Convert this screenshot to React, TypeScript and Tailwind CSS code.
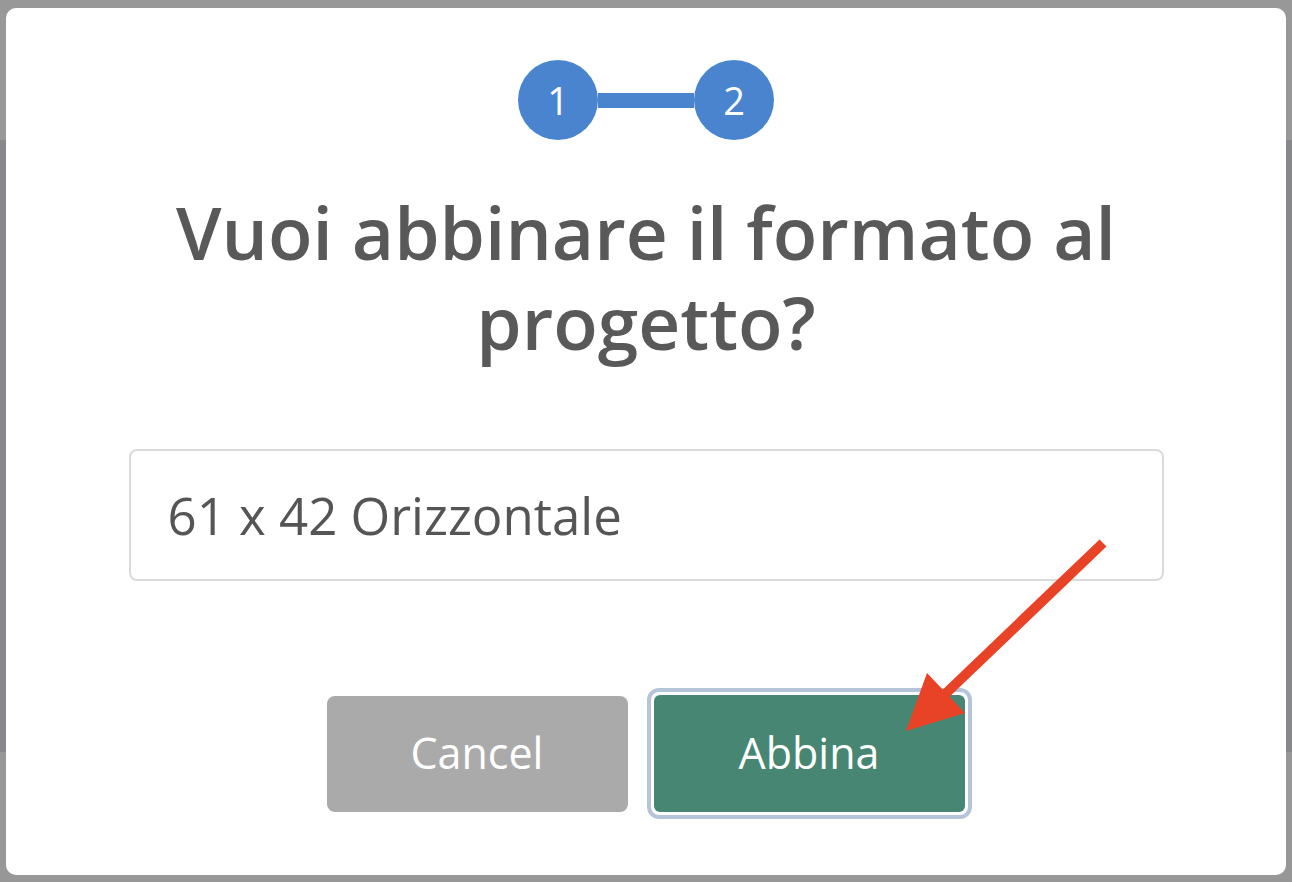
export default function App() {
  return (
    <div
      className="h-[882px] w-full overflow-hidden pt-[8px] pb-[7px] pl-[6px] pr-[6px] bg-[linear-gradient(to_bottom,#989898_140px,#87888b_140px,#87888b_752px,#979797_752px)]"
      style={{ fontFamily: '"Open Sans", "Liberation Sans", sans-serif' }}
    >
      <div className="relative flex h-full flex-col items-center rounded-[10px] bg-white pt-[52px]">
        {/* stepper */}
        <div className="flex items-center">
          <div className="flex h-[80px] w-[80px] items-center justify-center rounded-full bg-[#4a84cf] text-[38px] text-white">
            1
          </div>
          <div className="h-[15px] w-[96px] bg-[#4a84cf]" />
          <div className="flex h-[80px] w-[80px] items-center justify-center rounded-full bg-[#4a84cf] text-[38px] text-white">
            2
          </div>
        </div>

        <h1 className="mt-[47px] text-center text-[73px] leading-[90px] font-semibold text-[#595959]">
          Vuoi abbinare il formato al
          <br />
          progetto?
        </h1>

        <div className="mt-[82px] flex h-[132px] w-[1035px] items-center rounded-[8px] border-2 border-[#dadada] pl-[37px] text-[51px] text-[#555555]">
          61 x 42 Orizzontale
        </div>

        <div className="mt-[107px] ml-[6px] flex items-center gap-[19px]">
          <button className="h-[116px] w-[301px] rounded-[8px] bg-[#aaaaaa] text-[43px] text-white">
            Cancel
          </button>
          <div className="rounded-[12px] border-[4px] border-[#b5c4d8] p-[3px]">
            <button className="h-[117px] w-[311px] rounded-[6px] bg-[#478672] text-[43px] text-white">
              Abbina
            </button>
          </div>
        </div>

        {/* annotation arrow */}
        <svg
          className="pointer-events-none absolute left-0 top-0"
          width="1280"
          height="867"
          viewBox="6 8 1280 867"
        >
          <line x1="1103" y1="543" x2="940" y2="699" stroke="#e84227" strokeWidth="10" />
          <polygon points="927,673 965,713 906,731" fill="#e84227" />
        </svg>
      </div>
    </div>
  )
}
